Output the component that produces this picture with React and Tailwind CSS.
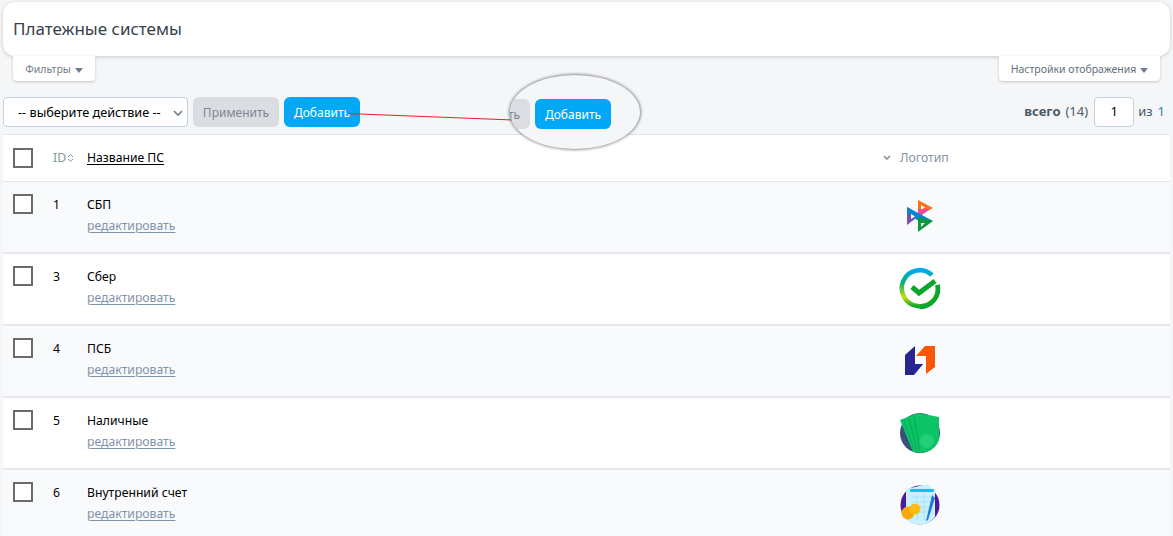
import React from 'react';

const font = "font-['Noto_Sans','Liberation_Sans',sans-serif]";

const SbpLogo = () => (
  <svg width="28" height="32" viewBox="0 0 28 32" className="-mt-[2px]">
    <path d="M12 0 L27 8 L12 16 Z" fill="#f97316" />
    <path d="M12 9 L24 9 L12 18 Z" fill="#ec4899" />
    <path d="M1 7 L14 15 L1 25 Z" fill="#7c4dab" />
    <path d="M1 7 L27 21 L17 24 L1 13 Z" fill="#0b84c9" />
    <path d="M12 17 L27 21 L12 32 Z" fill="#0a9a3c" />
    <path d="M5 14 L9 16.5 L5 19 Z" fill="#f9fafc" />
    <path d="M15 5 L19 7.5 L15 9.5 Z" fill="#f9fafc" />
    <path d="M15 23 L19 23 L15 27 Z" fill="#f9fafc" />
  </svg>
);

const SberLogo = () => (
  <svg width="42" height="42" viewBox="0 0 42 42" fill="none">
    <defs>
      <linearGradient id="sberRing" x1="0" y1="0" x2="0" y2="1">
        <stop offset="0" stopColor="#00a9f0" />
        <stop offset="0.35" stopColor="#08b36a" />
        <stop offset="0.75" stopColor="#c8dc10" />
        <stop offset="1" stopColor="#0bab2a" />
      </linearGradient>
    </defs>
    <path d="M33 7 A18 18 0 1 0 38.5 17" stroke="url(#sberRing)" strokeWidth="4.5" />
    <path d="M38.5 17 A18 18 0 0 1 21 39" stroke="#0aa52b" strokeWidth="4.5" />
    <path d="M13 19 L20 25 L36 13" stroke="#0aa52b" strokeWidth="5" />
  </svg>
);

const PsbLogo = () => (
  <svg width="30" height="32" viewBox="0 0 30 32">
    <path d="M0 10 L10 1 L10 18 L19 18 L9 30 L0 30 Z" fill="#27268f" />
    <path d="M11 11 L20 1 L30 1 L30 22 L21 29 L21 11 Z" fill="#fb5607" />
    <path d="M10 11 L20 11 L20 19 L10 19 Z" fill="#f9fafc" />
  </svg>
);

const CashLogo = () => (
  <svg width="42" height="42" viewBox="0 0 42 42">
    <circle cx="21" cy="21" r="20" fill="#38517a" />
    <path d="M1 8 L19 1 L40 5 L40 28 A20 20 0 0 1 21 41 L14 40 Z" fill="#0bc466" />
    <path d="M5 8 L15 38 M10 6 L18 39 M15 4 L21 40" stroke="#07a857" strokeWidth="1" />
    <circle cx="28" cy="29" r="7" fill="#22cf78" />
  </svg>
);

const WalletLogo = () => (
  <svg width="42" height="42" viewBox="0 0 42 42">
    <circle cx="21" cy="21" r="19.5" fill="#4c1a9a" />
    <path d="M7 5 L29 0 L36 8 L36 33 A19 19 0 0 1 7 35 Z" fill="#c9f0fd" />
    <rect x="11" y="5" width="24" height="3" rx="1" fill="#12bff0" />
    <path d="M12 13 H34 M12 18 H34 M12 23 H34 M12 28 H34 M18 10 V36 M25 10 V36" stroke="#a5e4fa" strokeWidth="1" />
    <path d="M33 11 L36 14 L29 36 L27 37 Z" fill="#2277e6" />
    <circle cx="9" cy="29" r="6.5" fill="#f5a90a" />
    <circle cx="16" cy="25" r="5.5" fill="#fbbd14" />
  </svg>
);

const rows = [
  { id: 1, name: 'СБП', logo: <SbpLogo /> },
  { id: 3, name: 'Сбер', logo: <SberLogo /> },
  { id: 4, name: 'ПСБ', logo: <PsbLogo /> },
  { id: 5, name: 'Наличные', logo: <CashLogo /> },
  { id: 6, name: 'Внутренний счет', logo: <WalletLogo /> },
];

const Caret = () => (
  <span className="ml-1 mt-px inline-block border-x-[4px] border-t-[5px] border-x-transparent border-t-[#6f7d8c]" />
);

const Checkbox = () => <span className="block h-5 w-5 border-2 border-[#6b6b6b] bg-white" />;

export default function App() {
  return (
    <div className={`relative h-[536px] overflow-hidden bg-[#f4f6f8] px-[3px] pt-[2px] ${font}`}>
      <div className="flex h-[54px] items-center rounded-xl bg-white pl-[10px] text-[17px] text-[#37414b] shadow-[0_1px_4px_rgba(0,0,0,0.18)]">
        Платежные системы
      </div>

      <div className="flex justify-between pl-[10px] pr-[10px]">
        <div className="flex h-[25px] w-[82px] items-center justify-center rounded-b bg-white pt-[2px] text-[10.5px] text-[#6f7d8c] shadow-[0_1px_3px_rgba(0,0,0,0.2)]">
          Фильтры <Caret />
        </div>
        <div className="flex h-[25px] w-[161px] items-center justify-center rounded-b bg-white pt-[2px] text-[10.5px] text-[#5f6f80] shadow-[0_1px_3px_rgba(0,0,0,0.2)]">
          Настройки отображения <Caret />
        </div>
      </div>

      <div className="mt-4 flex h-[30px] items-center">
        <div className="flex h-[30px] w-[185px] items-center justify-between rounded border border-[#c5d0dc] bg-white pl-[14px] pr-[3px] pt-[2px] text-[12.7px] text-black">
          -- выберите действие --
          <svg width="12" height="12" viewBox="0 0 12 12" fill="none" stroke="#6f7d8c" strokeWidth="1.6">
            <path d="M2 4 L6 8 L10 4" />
          </svg>
        </div>
        <div className="ml-[5px] flex h-[30px] w-[86px] items-center justify-center rounded-md bg-[#dcdde2] pt-[2px] text-[12px] text-[#7d8794]">
          Применить
        </div>
        <div className="ml-[5px] flex h-[30px] w-[76px] items-center justify-center rounded-md bg-[#00a8f6] pt-[2px] text-[12px] text-white">
          Добавить
        </div>
        <div className="ml-auto flex items-center pr-[5px] text-[13px] text-[#4b5a69]">
          <span className="font-bold">всего</span>
          <span className="ml-[5px]">(14)</span>
          <span className="ml-[6px] flex h-[30px] w-[40px] items-center justify-center rounded border border-[#c5d0dc] bg-white text-black">1</span>
          <span className="ml-[4px]">из</span>
          <span className="ml-[5px] text-[#2f7fa8]">1</span>
        </div>
      </div>

      <div className="mt-[7px] border-t border-[#e1e5ec] bg-white">
        <div className="flex h-[47px] items-center border-b border-[#e1e5ec] text-[12.2px]">
          <div className="w-[50px] pl-[10px]"><Checkbox /></div>
          <div className="flex w-[34px] items-center text-[#7d9a8f]">
            ID
            <svg width="7" height="10" viewBox="0 0 7 10" fill="none" stroke="#8b97a3" strokeWidth="1" className="ml-px">
              <path d="M1 4 L3.5 1.5 L6 4 M1 6 L3.5 8.5 L6 6" />
            </svg>
          </div>
          <div className="w-[796px] text-black underline underline-offset-2">Название ПС</div>
          <div className="flex items-center text-[#8494a5]">
            <svg width="8" height="6" viewBox="0 0 8 6" fill="none" stroke="#7b8896" strokeWidth="1.4">
              <path d="M1 1 L4 4 L7 1" />
            </svg>
            <span className="ml-[9px]">Логотип</span>
          </div>
        </div>

        {rows.map((row, i) => (
          <div
            key={row.id}
            className={`flex h-[72px] border-b-2 border-[#e6e8ec] text-[12.2px] ${i % 2 === 0 ? 'bg-[#f9fafc]' : 'bg-white'}`}
          >
            <div className="w-[50px] pl-[10px] pt-[12px]"><Checkbox /></div>
            <div className="w-[34px] pt-[14px] text-black">{row.id}</div>
            <div className="w-[812px] pt-[14px]">
              <div className="text-black">{row.name}</div>
              <a className="mt-[3px] block text-[#7f93a8] underline underline-offset-2">редактировать</a>
            </div>
            <div className="flex h-[70px] w-[42px] items-center justify-center">{row.logo}</div>
          </div>
        ))}
      </div>

      {/* выноска с увеличенной кнопкой */}
      <svg width="1173" height="536" className="pointer-events-none absolute left-0 top-0">
        <line x1="347" y1="113.5" x2="513" y2="120" stroke="#ee1c25" strokeWidth="1" />
      </svg>
      <div className="absolute left-[510px] top-[75px] flex h-[74px] w-[130px] items-center overflow-hidden rounded-[50%] bg-[#f4f6f8] pt-[4px] shadow-[0_0_3px_1px_rgba(0,0,0,0.45)]">
        <div className="flex h-[30px] w-[20px] items-center justify-end overflow-hidden rounded-r-md bg-[#dcdde2] pr-[10px] pt-[2px] text-[12px] text-[#7d8794]">ть</div>
        <div className="ml-[5px] flex h-[30px] w-[76px] items-center justify-center rounded-md bg-[#00a8f6] pt-[2px] text-[12px] text-white">
          Добавить
        </div>
      </div>
    </div>
  );
}
